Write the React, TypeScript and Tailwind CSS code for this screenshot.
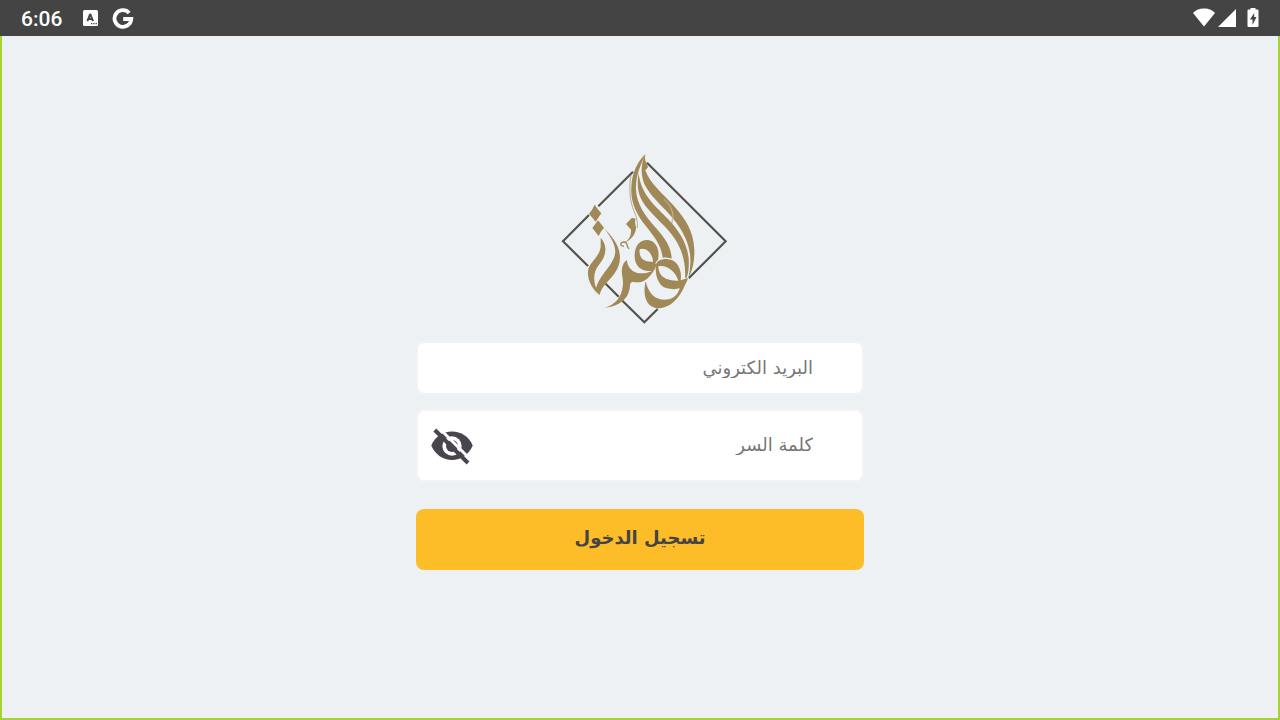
function StatusBar() {
  return (
    <header className="flex h-9 shrink-0 items-center justify-between bg-[#444444] pl-[21px] pr-[21px] text-white">
      <div className="flex items-center">
        <time className="w-[62px] pt-[2px] font-[Roboto,sans-serif] text-[21px] font-medium leading-6">6:06</time>
        <svg viewBox="0 0 15 17" className="h-[17px] w-[15px]" aria-hidden="true">
          <rect width="15" height="16" rx="1.5" fill="white" />
          <path d="M7.2 3.8 4.4 11.2M7.2 3.8l2.8 7.4M5.3 9h3.8" stroke="#444444" strokeWidth="1.9" fill="none" />
          <path d="M8 13.7h1.3M10.3 13.7h1.3M12.6 13.7h1.3" stroke="#444444" strokeWidth="1.2" />
        </svg>
        <svg viewBox="0 0 22 22" className="ml-[14px] mt-[2px] h-[22px] w-[22px]" aria-hidden="true">
          <path d="M17.2 4.9A8.4 8.4 0 1 0 19.3 11H11.2" stroke="white" strokeWidth="3.8" fill="none" />
        </svg>
      </div>
      <div className="flex items-center">
        <svg viewBox="0 0 24 20" className="h-5 w-6" aria-hidden="true">
          <path d="M12 18.400 1 5C3 2.400 7 .4 12 .4s9 2 11 4.600Z" fill="white" />
        </svg>
        <svg viewBox="0 0 20 20" className="ml-[1px] h-5 w-5" aria-hidden="true">
          <path d="M1 19 19 1v18Z" fill="white" />
        </svg>
        <svg viewBox="0 0 12 20" className="ml-[10px] h-5 w-3" aria-hidden="true">
          <path d="M3.500 0h5v1.500H10.500q1 0 1 1V18q0 1-1 1H1.500q-1 0-1-1V2.500q0-1 1-1h2Z" fill="white" />
          <path d="M7.200 5 3 11.500h2.500v5.500L9.500 9H7.200Z" fill="#444444" />
        </svg>
      </div>
    </header>
  );
}

function EyeOff() {
  return (
    <svg viewBox="0 0 46 46" className="h-[46px] w-[46px]" aria-hidden="true">
      <path d="M2.300 22.500C6 13.500 14 8.500 23 8.500s17 5 20.700 14C40 31.500 32 37 23 37S6 31.500 2.300 22.500Z" fill="#49454f" />
      <circle cx="23" cy="23" r="9.700" fill="white" />
      <circle cx="23" cy="23" r="6" fill="#49454f" />
      <path d="M10.500 5.500 42 37" stroke="white" strokeWidth="3" />
      <path d="M5.800 7 39 40" stroke="#49454f" strokeWidth="4" />
    </svg>
  );
}

function Logo() {
  return (
    <svg viewBox="0 0 570 570" className="h-[190px] w-[190px]" role="img" aria-label="الوفرة">
      <path
        d="M117 210 39 289 114 363M145 184 249 80M291 53 527 289 416 400M323 492 283 532 217 467M206 455 167 416"
        fill="none"
        stroke="#50524b"
        strokeWidth="6.500"
      />
      <g fill="#a08857">
        <path d="M286 27C262 52 246 82 244 125C241 172 258 205 288 244C314 277 334 302 338 338Q354 335 365 343C365 308 345 279 318 249C285 212 261 180 258 135C256 95 272 60 286 27Z" />
        <path d="M266 84C260 120 262 150 286 182C316 220 350 244 375 282C397 316 408 355 405 402L386 427C411 416 419 379 416 340C411 292 385 255 354 222C318 184 272 150 266 84Z" />
        <path d="M286 27C272 55 272 90 283 117C300 152 336 182 368 219C402 260 421 303 421 344Q422 373 415 398C427 379 434 348 433 315C431 260 408 224 370 181C341 149 299 115 286 76L294 67L289 52Q283 47 286 27Z" />
        <path d="M287 408C296 452 323 469 356 463C379 458 389 439 390 421L411 403C399 443 373 485 330 490C289 491 277 452 287 408Z" />
        <path
          fillRule="evenodd"
          d="M254 334C253 302 270 284 293 285C316 286 329 310 325 340C321 369 300 402 276 410C257 416 244 404 240 419C239 456 216 482 165 488C197 478 215 454 218 425C223 399 207 382 222 353L230 345Q235 376 259 383C281 388 298 382 306 377C279 382 254 367 254 334ZM269 313C266 339 281 352 309 350C308 322 285 305 269 313Z"
        />
        <path d="M318 357C321 339 357 334 377 350C391 363 396 385 392 404L416 399" fill="none" stroke="#edf1f4" strokeWidth="4" />
        <path
          fillRule="evenodd"
          d="M318 359C321 341 357 335 376 352C391 366 395 388 392 406L414 399C407 430 379 437 351 430C324 423 314 389 318 359ZM325 364C325 385 338 409 385 407C378 383 352 358 325 364Z"
        />
        <path d="M246 218 228 237 243 254C244 273 236 286 221 294C245 287 259 263 258 247Q253 229 257 221Z" />
        <path d="M134 179Q143 193 154 205L137 230 117 206Q127 195 134 179Z" />
        <path d="M144 226 162 248Q152 259 146 273L127 249Z" />
        <path d="M152 278C175 304 168 334 147 359C128 382 127 415 149 450C126 433 112 404 114 379C116 351 147 340 152 306Z" />
        <path d="M162 248C185 275 210 298 210 339C209 373 187 395 169 414Q153 431 149 450L137 432C145 397 181 366 192 338C206 304 178 273 162 248Z" />
      </g>
      <g fill="none" stroke="#a08857">
        <path d="M243 88C234 147 243 179 258 213Q264 232 262 249" strokeWidth="2" />
        <path d="M368 215Q368 236 358 257" strokeWidth="2" />
        <path d="M238 311C227 309 237 292 223 291C209 290 209 306 222 303" strokeWidth="4" />
      </g>
      <path d="M342 163C366 184 372 205 368 235" fill="none" stroke="#d8cfb9" strokeWidth="2" />
    </svg>
  );
}

const field =
  "w-full rounded-lg border-2 border-[#f2f3f7] bg-white pr-[49px] pb-[2px] text-right font-['DejaVu_Sans',sans-serif] text-[18px] text-[#777777] placeholder:text-[#777777] placeholder:opacity-100 outline-none";

export default function App() {
  return (
    <div className="flex min-h-screen flex-col bg-[#edf1f4]">
      <StatusBar />
      <main className="flex grow flex-col items-center border-x-2 border-b-2 border-[#a8d32f] px-4 pt-[109px]">
        <div className="pl-[10px]">
          <Logo />
        </div>
        <form dir="rtl" className="mt-[6px] flex w-full max-w-md flex-col" onSubmit={(e) => e.preventDefault()}>
          <input type="email" aria-label="البريد الكتروني" placeholder="البريد الكتروني" className={`${field} h-[54px] pl-4`} />
          <div className="relative mt-[14px]">
            <input type="password" aria-label="كلمة السر" placeholder="كلمة السر" className={`${field} h-[73px] pl-16`} />
            <button type="button" aria-label="إظهار كلمة السر" className="absolute inset-y-0 left-[13px]">
              <EyeOff />
            </button>
          </div>
          <button
            type="submit"
            className="mt-[27px] h-[61px] rounded-lg bg-[#fdbd28] pb-1 font-['DejaVu_Sans',sans-serif] text-[18px] font-bold text-[#444444]"
          >
            تسجيل الدخول
          </button>
        </form>
      </main>
    </div>
  );
}
